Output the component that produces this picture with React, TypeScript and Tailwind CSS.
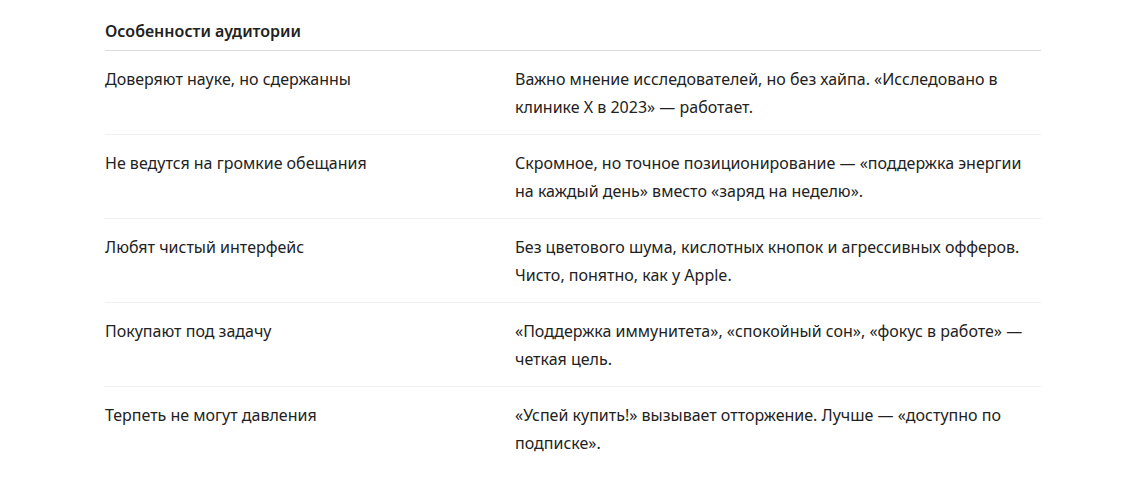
const rows = [
  {
    trait: 'Доверяют науке, но сдержанны',
    text: 'Важно мнение исследователей, но без хайпа. «Исследовано в клинике X в 2023» — работает.',
  },
  {
    trait: 'Не ведутся на громкие обещания',
    text: 'Скромное, но точное позиционирование — «поддержка энергии на каждый день» вместо «заряд на неделю».',
  },
  {
    trait: 'Любят чистый интерфейс',
    text: 'Без цветового шума, кислотных кнопок и агрессивных офферов. Чисто, понятно, как у Apple.',
  },
  {
    trait: 'Покупают под задачу',
    text: '«Поддержка иммунитета», «спокойный сон», «фокус в работе» — четкая цель.',
  },
  {
    trait: 'Терпеть не могут давления',
    text: '«Успей купить!» вызывает отторжение. Лучше — «доступно по подписке».',
  },
];

export default function App() {
  return (
    <div className="min-h-screen bg-white pl-[105px] font-['Noto_Sans',sans-serif] text-[#222]">
      <div className="w-[936px] pt-5">
        {/* Заголовок */}
        <div className="border-b border-[#dcdcdc] pb-2">
          <h2 className="text-[16px] leading-[22px] font-semibold">Особенности аудитории</h2>
        </div>

        {rows.map((row, idx) => (
          <div
            key={idx}
            className={`grid grid-cols-[410px_1fr] pt-[14px] pb-[13px] text-[16px] leading-[28px] ${
              idx < rows.length - 1 ? 'border-b border-[#f0f0f0]' : ''
            }`}
          >
            <div>{row.trait}</div>
            <div className="pr-[8px]">{row.text}</div>
          </div>
        ))}
      </div>
    </div>
  );
}
